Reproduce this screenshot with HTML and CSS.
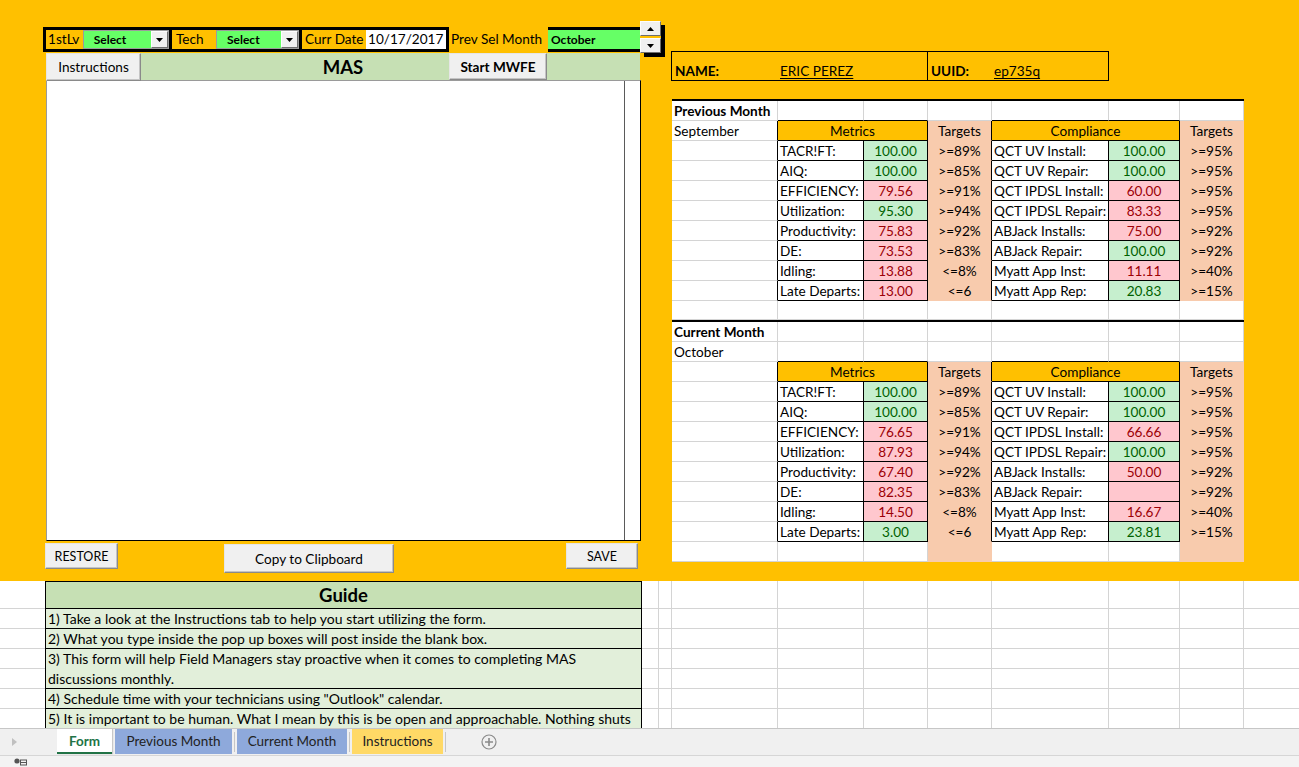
FILE: index.html
```html
<!DOCTYPE html>
<html>
<head>
<meta charset="utf-8">
<title>MAS Form</title>
<link rel="stylesheet" href="styles.css">
</head>
<body>
<div class="sheet">
  <div class="top">
    <div class="form">
      <div class="ctrl">
        <div class="box b1"><span class="lbl">1stLv</span><div class="combo"><span class="ctext">Select</span><span class="dd"><svg width="7" height="4" viewBox="0 0 7 4"><path d="M0 0h7L3.5 4z"/></svg></span></div></div>
        <div class="box b2"><span class="lbl">Tech</span><div class="combo"><span class="ctext">Select</span><span class="dd"><svg width="7" height="4" viewBox="0 0 7 4"><path d="M0 0h7L3.5 4z"/></svg></span></div></div>
        <div class="box b3"><span class="lbl">Curr Date</span><div class="date">10/17/2017</div></div>
        <div class="plbl">Prev Sel Month</div>
        <div class="box b4"><span class="mon">October</span></div>
        <div class="spin">
          <span class="sp"><svg width="7" height="4" viewBox="0 0 7 4"><path d="M0 4h7L3.5 0z"/></svg></span>
          <span class="sp"><svg width="7" height="4" viewBox="0 0 7 4"><path d="M0 0h7L3.5 4z"/></svg></span>
        </div>
      </div>
      <div class="bar">
        <span class="title">MAS</span>
        <span class="btn instr">Instructions</span>
        <span class="btn mwfe">Start MWFE</span>
      </div>
      <div class="textbox"><div class="ta"></div><div class="sb"></div></div>
      <div class="actions">
        <span class="btn restore">RESTORE</span>
        <span class="btn copy">Copy to Clipboard</span>
        <span class="btn save">SAVE</span>
      </div>
    </div>

    <div class="report">
      <div class="idbox">
        <div class="idc n1"><span class="idl">NAME:</span><span class="idv">ERIC PEREZ</span></div>
        <div class="idc n2"><span class="idl">UUID:</span><span class="idv">ep735q</span></div>
      </div>

      <div class="month m1">
        <div class="c b">Previous Month</div><div class="c kb"></div><div class="c kb"></div><div class="c"></div><div class="c kb"></div><div class="c kb"></div><div class="c"></div>
        <div class="c kr">September</div><div class="c hd">Metrics</div><div class="c tg kr">Targets</div><div class="c hd">Compliance</div><div class="c tg">Targets</div>

        <div class="c kr"></div><div class="c k">TACR!FT:</div><div class="c k v g">100.00</div><div class="c tg kr">&gt;=89%</div><div class="c k">QCT UV Install:</div><div class="c k v g">100.00</div><div class="c tg">&gt;=95%</div>
        <div class="c kr"></div><div class="c k">AIQ:</div><div class="c k v g">100.00</div><div class="c tg kr">&gt;=85%</div><div class="c k">QCT UV Repair:</div><div class="c k v g">100.00</div><div class="c tg">&gt;=95%</div>
        <div class="c kr"></div><div class="c k">EFFICIENCY:</div><div class="c k v r">79.56</div><div class="c tg kr">&gt;=91%</div><div class="c k">QCT IPDSL Install:</div><div class="c k v r">60.00</div><div class="c tg">&gt;=95%</div>
        <div class="c kr"></div><div class="c k">Utilization:</div><div class="c k v g">95.30</div><div class="c tg kr">&gt;=94%</div><div class="c k">QCT IPDSL Repair:</div><div class="c k v r">83.33</div><div class="c tg">&gt;=95%</div>
        <div class="c kr"></div><div class="c k">Productivity:</div><div class="c k v r">75.83</div><div class="c tg kr">&gt;=92%</div><div class="c k">ABJack Installs:</div><div class="c k v r">75.00</div><div class="c tg">&gt;=92%</div>
        <div class="c kr"></div><div class="c k">DE:</div><div class="c k v r">73.53</div><div class="c tg kr">&gt;=83%</div><div class="c k">ABJack Repair:</div><div class="c k v g">100.00</div><div class="c tg">&gt;=92%</div>
        <div class="c kr"></div><div class="c k">Idling:</div><div class="c k v r">13.88</div><div class="c tg kr">&lt;=8%</div><div class="c k">Myatt App Inst:</div><div class="c k v r">11.11</div><div class="c tg">&gt;=40%</div>
        <div class="c kr"></div><div class="c k">Late Departs:</div><div class="c k v r">13.00</div><div class="c tg kr">&lt;=6</div><div class="c k">Myatt App Rep:</div><div class="c k v g">20.83</div><div class="c tg">&gt;=15%</div>

        <div class="c"></div><div class="c"></div><div class="c"></div><div class="c"></div><div class="c"></div><div class="c"></div><div class="c"></div>
      </div>

      <div class="month m2">
        <div class="c b">Current Month</div><div class="c"></div><div class="c"></div><div class="c"></div><div class="c"></div><div class="c"></div><div class="c"></div>
        <div class="c">October</div><div class="c kb"></div><div class="c kb"></div><div class="c"></div><div class="c kb"></div><div class="c kb"></div><div class="c"></div>
        <div class="c kr"></div><div class="c hd">Metrics</div><div class="c tg kr">Targets</div><div class="c hd">Compliance</div><div class="c tg">Targets</div>

        <div class="c kr"></div><div class="c k">TACR!FT:</div><div class="c k v g">100.00</div><div class="c tg kr">&gt;=89%</div><div class="c k">QCT UV Install:</div><div class="c k v g">100.00</div><div class="c tg">&gt;=95%</div>
        <div class="c kr"></div><div class="c k">AIQ:</div><div class="c k v g">100.00</div><div class="c tg kr">&gt;=85%</div><div class="c k">QCT UV Repair:</div><div class="c k v g">100.00</div><div class="c tg">&gt;=95%</div>
        <div class="c kr"></div><div class="c k">EFFICIENCY:</div><div class="c k v r">76.65</div><div class="c tg kr">&gt;=91%</div><div class="c k">QCT IPDSL Install:</div><div class="c k v r">66.66</div><div class="c tg">&gt;=95%</div>
        <div class="c kr"></div><div class="c k">Utilization:</div><div class="c k v r">87.93</div><div class="c tg kr">&gt;=94%</div><div class="c k">QCT IPDSL Repair:</div><div class="c k v g">100.00</div><div class="c tg">&gt;=95%</div>
        <div class="c kr"></div><div class="c k">Productivity:</div><div class="c k v r">67.40</div><div class="c tg kr">&gt;=92%</div><div class="c k">ABJack Installs:</div><div class="c k v r">50.00</div><div class="c tg">&gt;=92%</div>
        <div class="c kr"></div><div class="c k">DE:</div><div class="c k v r">82.35</div><div class="c tg kr">&gt;=83%</div><div class="c k">ABJack Repair:</div><div class="c k v r"></div><div class="c tg">&gt;=92%</div>
        <div class="c kr"></div><div class="c k">Idling:</div><div class="c k v r">14.50</div><div class="c tg kr">&lt;=8%</div><div class="c k">Myatt App Inst:</div><div class="c k v r">16.67</div><div class="c tg">&gt;=40%</div>
        <div class="c kr"></div><div class="c k">Late Departs:</div><div class="c k v g">3.00</div><div class="c tg kr">&lt;=6</div><div class="c k">Myatt App Rep:</div><div class="c k v g">23.81</div><div class="c tg">&gt;=15%</div>

        <div class="c"></div><div class="c"></div><div class="c"></div><div class="c tg"></div><div class="c"></div><div class="c"></div><div class="c tg"></div>
      </div>
    </div>
  </div>

  <div class="bottom">
    <div class="guide">
      <div class="gh">Guide</div>
      <div class="gr">1) Take a look at the Instructions tab to help you start utilizing the form.</div>
      <div class="gr">2) What you type inside the pop up boxes will post inside the blank box.</div>
      <div class="gr g2">3) This form will help Field Managers stay proactive when it comes to completing MAS<br>discussions monthly.</div>
      <div class="gr">4) Schedule time with your technicians using "Outlook" calendar.</div>
      <div class="gr g2">5) It is important to be human. What I mean by this is be open and approachable. Nothing shuts</div>
    </div>
  </div>
</div>

<div class="tabs">
  <span class="nav"><svg width="5" height="8" viewBox="0 0 5 8"><path d="M0 0l5 4-5 4z"/></svg></span>
  <span class="tab active">Form</span>
  <span class="tab prev">Previous Month</span>
  <span class="sep"></span>
  <span class="tab cur">Current Month</span>
  <span class="sep"></span>
  <span class="tab ins">Instructions</span>
  <span class="sep"></span>
  <span class="add"><svg width="16" height="16" viewBox="0 0 16 16"><circle cx="8" cy="8" r="7" fill="none" stroke="#8a8a8a" stroke-width="1.2"/><path d="M8 4v8M4 8h8" stroke="#8a8a8a" stroke-width="1.6"/></svg></span>
</div>
<div class="status">
  <svg width="14" height="8" viewBox="0 0 14 8"><circle cx="3" cy="3" r="2.6" fill="#555"/><rect x="6.5" y="2" width="6" height="5" fill="none" stroke="#555"/><path d="M7 4.5h5" stroke="#555"/></svg>
</div>
</body>
</html>
```

FILE: styles.css
```css
* { box-sizing: border-box; }
html, body { margin: 0; padding: 0; }
body {
  width: 1299px;
  height: 767px;
  overflow: hidden;
  background: #fff;
  color: #000;
  font-family: Lato, "Noto Sans", sans-serif;
  font-size: 13.6px;
}

.sheet { height: 728px; overflow: hidden; }
.top { height: 581px; background: #ffc000; display: flex; }

/* ---------- left form ---------- */
.form { width: 628px; margin-left: 43px; padding-top: 21px; }
.ctrl { display: flex; align-items: flex-start; height: 32px; }
.box {
  display: flex;
  align-items: center;
  height: 25px;
  margin-top: 6px;
  border: 3px solid #000;
}
.b1 { width: 129px; }
.b2 { width: 130px; border-left: 0; }
.b3 { width: 147px; border-left: 0; }
.b4 { width: 92px; background: #66ff66; border-left: 0; border-right: 0; }
.lbl { line-height: 19px; padding-left: 2px; white-space: nowrap; }
.b1 .lbl { width: 37px; }
.b2 .lbl { width: 44px; padding-left: 4px; }
.b3 .lbl { width: 64px; padding-left: 3px; }
.combo {
  display: flex;
  align-items: center;
  height: 19px;
  background: #66ff66;
  border: 1px solid #9c9c9c;
}
.b1 .combo { width: 87px; }
.b2 .combo { width: 83px; }
.ctext { flex: 1; padding-left: 10px; font-weight: 700; font-size: 12px; line-height: 17px; }
.dd, .sp {
  display: flex;
  align-items: center;
  justify-content: center;
  background: #f0f0f0;
  border: 1px solid;
  border-color: #fdfdfd #6e6e6e #6e6e6e #fdfdfd;
}
.dd { width: 17px; height: 17px; }
.date { width: 80px; height: 19px; background: #fff; line-height: 19px; padding-left: 2px; }
.plbl { width: 99px; height: 25px; margin-top: 6px; padding: 3px 0 0 2px; line-height: 19px; white-space: nowrap; }
.mon { font-weight: 700; font-size: 12px; padding-left: 3px; line-height: 19px; }
.spin {
  width: 21px;
  display: flex;
  flex-direction: column;
  gap: 2px;
  box-shadow: 4px 4px 0 #000;
}
.sp { height: 15px; }

.bar {
  position: relative;
  margin-left: 3px;
  width: 594px;
  height: 27px;
  background: #c6e0b4;
  text-align: center;
}
.title { font-weight: 700; font-size: 18.5px; line-height: 28px; }
.btn {
  display: inline-flex;
  align-items: center;
  justify-content: center;
  background: #f0f0f0;
  border: 1px solid;
  border-color: #e6e6e6 #8a8a8a #8a8a8a #e6e6e6;
  box-shadow: inset -1px -1px 0 #c4c4c4;
  white-space: nowrap;
}
.instr { position: absolute; left: 0; top: 0; width: 95px; height: 28px; }
.mwfe { position: absolute; left: 403px; top: 0; width: 98px; height: 27px; font-weight: 700; }

.textbox {
  display: flex;
  margin-left: 3px;
  width: 595px;
  height: 461px;
  background: #fff;
  border-top: 1px solid #9a9a9a;
  border-left: 1px solid #9a9a9a;
  border-right: 1px solid #000;
  border-bottom: 1px solid #000;
}
.ta { flex: 1; }
.sb { width: 16px; border-left: 1px solid #5a5a5a; }

.actions { display: flex; align-items: flex-start; height: 40px; }
.restore { margin: 2px 0 0 2px; width: 73px; height: 26px; font-size: 12.5px; }
.copy { margin: 3px 0 0 106px; width: 170px; height: 29px; }
.save { margin: 2px 0 0 172px; width: 72px; height: 26px; font-size: 12.5px; }

/* ---------- right report ---------- */
.report { padding-top: 51px; }
.idbox { display: flex; width: 438px; height: 30px; border: 1px solid #000; }
.idc { display: flex; padding: 9px 0 0 3px; line-height: 20px; white-space: nowrap; }
.n1 { width: 256px; border-right: 1px solid #000; }
.n2 { flex: 1; }
.idl { font-weight: 700; }
.n1 .idl { width: 105px; }
.n2 .idl { width: 63px; }
.idv { text-decoration: underline; text-underline-offset: 2px; }

.month {
  display: grid;
  grid-template-columns: 106px 86px 64px 64px 117px 71px 64px;
  grid-auto-rows: 20px;
  width: 572px;
  margin-left: 1px;
  background: #fff;
  border-top: 2px solid #000;
}
.m1 { margin-top: 18px; grid-template-rows: repeat(10, 20px) 19px; }
.c {
  border-right: 1px solid #d4d4d4;
  border-bottom: 1px solid #d4d4d4;
  padding: 0 2px;
  line-height: 21px;
  white-space: nowrap;
}
.b { font-weight: 700; }
.k { border-color: #000; }
.hd { grid-column: span 2; background: #ffc000; border-color: #000; text-align: center; }
.tg { background: #f8cbad; border-color: #f8cbad; text-align: center; }
.kr { border-right-color: #000; }
.kb { border-bottom-color: #000; }
.v { text-align: center; }
.g { background: #c6efce; color: #006100; }
.r { background: #ffc7ce; color: #9c0006; }

/* ---------- lower sheet ---------- */
.bottom {
  height: 147px;
  background-color: #fff;
  background-image:
    linear-gradient(to right,
      transparent 658px, #d4d4d4 658px 659px,
      transparent 659px 671px, #d4d4d4 671px 672px,
      transparent 672px 777px, #d4d4d4 777px 778px,
      transparent 778px 863px, #d4d4d4 863px 864px,
      transparent 864px 927px, #d4d4d4 927px 928px,
      transparent 928px 991px, #d4d4d4 991px 992px,
      transparent 992px 1108px, #d4d4d4 1108px 1109px,
      transparent 1109px 1179px, #d4d4d4 1179px 1180px,
      transparent 1180px 1243px, #d4d4d4 1243px 1244px,
      transparent 1244px),
    repeating-linear-gradient(to bottom, transparent 0 19px, #d4d4d4 19px 20px);
  background-position: 0 0, 0 8px;
  background-size: 100% 100%, 100% 139px;
  background-repeat: no-repeat;
}
.guide {
  margin-left: 45px;
  width: 597px;
  border: 1px solid #000;
  border-bottom: 0;
  background: #e2efda;
}
.gh {
  height: 27px;
  padding-top: 1px;
  background: #c6e0b4;
  border-bottom: 1px solid #000;
  text-align: center;
  font-weight: 700;
  font-size: 18.5px;
  line-height: 25px;
}
.gr {
  height: 20px;
  padding-left: 2px;
  border-bottom: 1px solid #000;
  font-size: 14px;
  line-height: 20px;
  white-space: nowrap;
}
.g2 { height: 40px; }

/* ---------- tab bar ---------- */
.tabs {
  display: flex;
  align-items: flex-start;
  height: 27px;
  background: #f0f0f0;
  border-top: 1px solid #c6c6c6;
  font-size: 13.5px;
}
.nav { width: 57px; height: 25px; display: flex; align-items: center; padding-left: 12px; fill: #c0c0c0; }
.tab { height: 25px; line-height: 24px; text-align: center; color: #222; white-space: nowrap; }
.active {
  width: 55px;
  background: #fff;
  color: #217346;
  font-weight: 700;
  border-bottom: 2px solid #217346;
  box-shadow: 1px 0 1px #c8c8c8;
}
.prev { width: 117px; margin-left: 3px; background: #8ea9db; }
.cur { width: 110px; background: #8ea9db; }
.ins { width: 91px; background: #ffd966; }
.sep { width: 1px; height: 20px; margin: 3px 2px 0; background: #c6c6c6; }
.add { margin-left: 33px; padding-top: 5px; display: flex; }
.status { height: 12px; background: #f3f3f3; border-top: 1px solid #d6d6d6; padding: 2px 0 0 14px; display: flex; }
```
